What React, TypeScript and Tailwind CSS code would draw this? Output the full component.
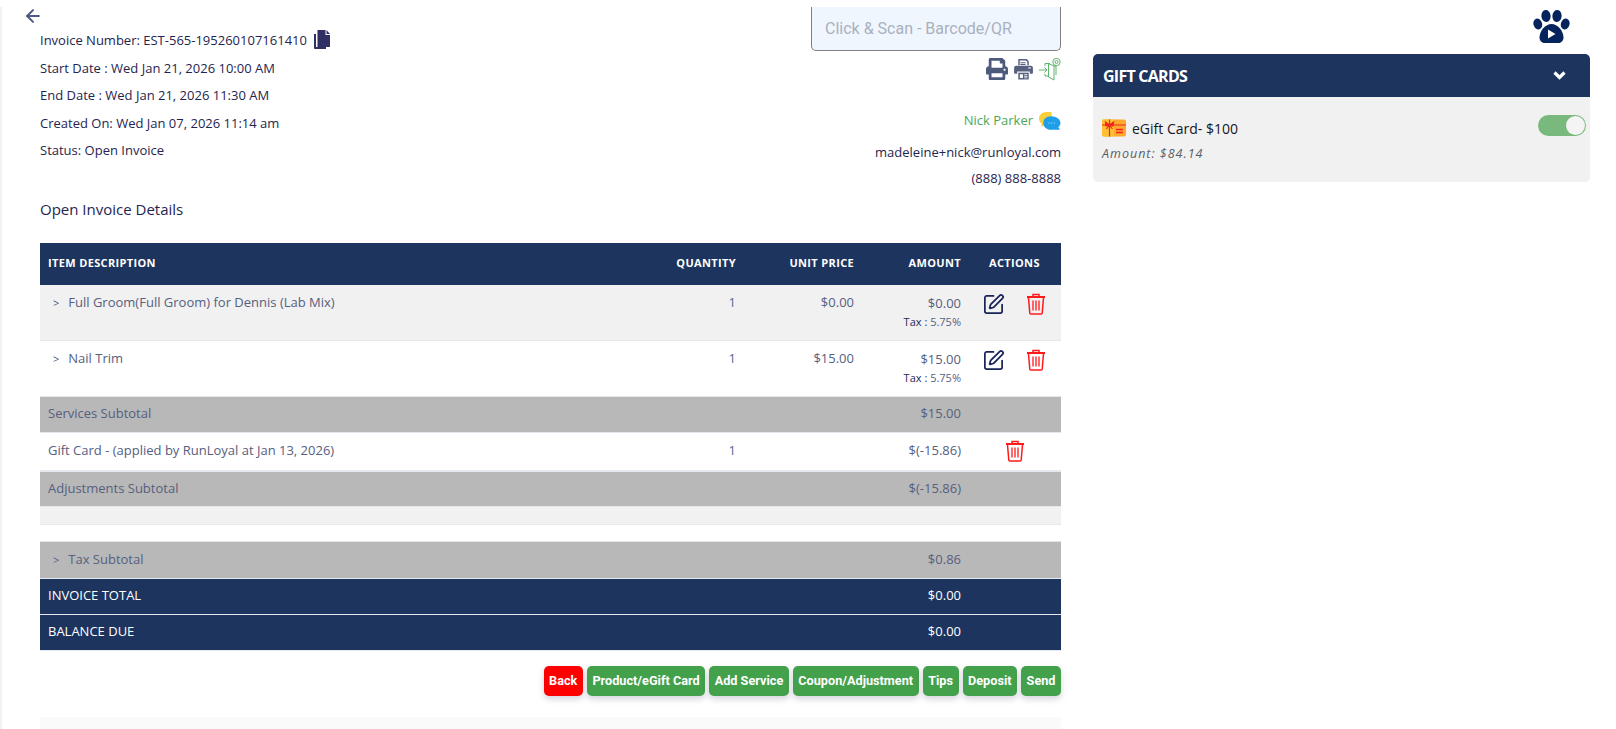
import React from 'react';
import { ArrowLeft, SquarePen } from 'lucide-react';
import { FaPrint } from 'react-icons/fa';

const cols = 'grid grid-cols-[610px_86px_118px_107px_100px]';

const TrashIcon = () => (
  <svg width="20" height="22" viewBox="0 0 20 22" fill="none" stroke="#ff1a1a" strokeWidth="1.5">
    <path d="M7 3V1.5h6V3" />
    <path d="M1 4h18" strokeWidth="2" />
    <path d="M2.5 5l1.3 15a1 1 0 0 0 1 1h10.4a1 1 0 0 0 1-1l1.3-15" />
    <path d="M7 7.5v10M10 7.5v10M13 7.5v10" strokeWidth="1.3" />
  </svg>
);

const CopyIcon = () => (
  <svg width="16" height="19" viewBox="0 0 16 19" fill="#2f2f63">
    <path d="M0 4h2v13h10v2H1a1 1 0 0 1-1-1z" />
    <path d="M3.500 0h8v5h4.500v12H3.500z" />
    <path d="M12.500 0 16 4h-3.500z" />
  </svg>
);

const FaxIcon = () => (
  <svg width="21" height="22" viewBox="0 0 19 21" fill="#56617f">
    <path d="M4.500 1h8l2 2v4h-1.400V3.600L11.800 2.400H5.900V7H4.500z" />
    <path d="M6.500 4h5v1h-5zM6.500 5.800h5v1h-5z" />
    <path d="M2.500 7.500h14a2 2 0 0 1 2 2V14a1 1 0 0 1-1 1h-2v-2H3.500v2h-2a1 1 0 0 1-1-1V9.500a2 2 0 0 1 2-2z" />
    <path d="M4.500 14h10v6.500h-10z" />
    <path d="M6 15.500h3v3.500H6zM10.200 15.500h3v.8h-3zM10.200 17h3v.8h-3zM10.200 18.500h3v.8h-3z" fill="#fff" />
    <path d="M14 9h2.500v1H14z" fill="#fff" />
  </svg>
);

const DoorIcon = () => (
  <svg width="22" height="24" viewBox="0 0 22 24" fill="none" stroke="#5cb56a" strokeWidth="1">
    <path d="M0 13h8M5.500 10.500 8 13l-2.500 2.500" />
    <path d="M6 9V6.500h5M6 17v2h3" />
    <path d="M9.500 6.500 15 9v14l-5.500-3z" />
    <path d="M15 9h2v9" />
    <circle cx="17.500" cy="5" r="1.500" />
    <circle cx="17.500" cy="5" r="3.700" />
  </svg>
);

const ChatIcon = () => (
  <svg width="23" height="21" viewBox="0 0 22 20">
    <path d="M8 1c-4 0-7 2.800-7 6.300 0 2 1 3.700 2.500 4.700L3 15l4-2h6V1z" fill="#fbcf3a" />
    <path d="M12.500 5C7.800 5 5 8 5 11.500S7.800 18 12.500 18H21l-1.500-2.500c1.300-1 2-2.500 2-4C21.500 8 17.500 5 12.500 5z" fill="#1e9fe8" />
    <path d="M10 11.500h1M12.500 11.500h1M15 11.500h1" stroke="#dff2fd" strokeWidth="0.800" />
  </svg>
);

const GiftCardIcon = () => (
  <svg width="24" height="18" viewBox="0 0 24 18">
    <rect x="0" y="0.500" width="24" height="17" rx="2" fill="#fda92d" />
    <path d="M0 .5h12v17H2a2 2 0 0 1-2-2z" fill="#fdc133" />
    <path d="M0 6h24M7.500.5v17" stroke="#f4231f" strokeWidth="1.200" />
    <path d="M7.500 6 3.500 3l.5 4zM7.500 6l4-3-.5 4zM7.500 6l-3 4M7.500 6l3 4" stroke="#f4231f" strokeWidth="1.200" fill="#f4231f" />
    <path d="M14 10.500h7M14 13.500h7" stroke="#f4231f" strokeWidth="1.500" />
  </svg>
);

const PawIcon = () => (
  <svg width="37" height="33" viewBox="0 0 37 33" fill="#03245c">
    <ellipse cx="4.800" cy="14" rx="4.300" ry="5.500" transform="rotate(-18 4.800 14)" />
    <ellipse cx="13" cy="6" rx="4.600" ry="6" transform="rotate(-5 13 6)" />
    <ellipse cx="24" cy="6" rx="4.600" ry="6" transform="rotate(5 24 6)" />
    <ellipse cx="32.200" cy="14" rx="4.300" ry="5.500" transform="rotate(18 32.200 14)" />
    <path d="M18.500 14c-6 0-12 7-12 13.500 0 3.500 2.500 5.500 5.500 5.500h13c3 0 5.500-2 5.500-5.500C30.500 21 24.500 14 18.500 14z" />
    <path d="M15 19.500v9l7.500-4.500z" fill="#fff" />
  </svg>
);

const RowActions = () => (
  <div className="flex items-start gap-[21px] pl-[21px] pt-[8px]">
    <SquarePen size={23} strokeWidth={1.8} className="text-[#1a2358]" />
    <TrashIcon />
  </div>
);

const ItemRow = ({ name, price, bg }: { name: string; price: string; bg: string }) => (
  <div className={`${cols} h-[56px] ${bg} border-b border-[#e4e7ee] text-[#56607f]`}>
    <div className="pt-[8px] pl-[13px]">
      <span className="text-[#4a5578] text-[11px] mr-[9px]">&gt;</span>
      {name}
    </div>
    <div className="pt-[8px] text-right text-[#4f6c96]">1</div>
    <div className="pt-[8px] text-right">{price}</div>
    <div className="pt-[8px] text-right">
      <div className="leading-[20px]">{price}</div>
      <div className="text-[11px] leading-[18px]">
        <span className="text-[#1c2a5e]">Tax : </span>5.75%
      </div>
    </div>
    <RowActions />
  </div>
);

const SubtotalRow = ({ label, amount, chevron, h }: { label: string; amount: string; chevron?: boolean; h: string }) => (
  <div className={`${cols} ${h} items-center pb-[1px] bg-[#b8b8b8] border-b border-[#e4e7ee] text-[#56607f]`}>
    <div className={chevron ? 'pl-[13px]' : 'pl-[8px]'}>
      {chevron && <span className="text-[11px] mr-[9px]">&gt;</span>}
      {label}
    </div>
    <div />
    <div />
    <div className="text-right">{amount}</div>
    <div />
  </div>
);

const TotalRow = ({ label, amount }: { label: string; amount: string }) => (
  <div className={`${cols} h-[36px] items-center pb-[1px] bg-[#1c345e] border-b border-[#e6e9f0] text-white`}>
    <div className="pl-[8px]">{label}</div>
    <div />
    <div />
    <div className="text-right">{amount}</div>
    <div />
  </div>
);

const buttons = ['Product/eGift Card', 'Add Service', 'Coupon/Adjustment', 'Tips', 'Deposit', 'Send'];

const ActionButton = ({ label, red }: { label: string; red?: boolean }) => (
  <button
    className={`h-[30px] rounded-[5px] px-[5.500px] text-white text-[12.700px] font-bold font-['Roboto',sans-serif] shadow-[0_3px_6px_rgba(60,60,90,0.22)] ${
      red ? 'bg-[#ff0000]' : 'bg-[#43a04b]'
    }`}
  >
    {label}
  </button>
);

export default function App() {
  return (
    <div className="w-[1616px] h-[729px] overflow-hidden bg-white pt-[7px] font-['Open_Sans',sans-serif] text-[13px]">
      <div className="flex h-[722px] border-l-2 border-[#f2f2f2]">
        {/* Invoice column */}
        <div className="w-[1059px] shrink-0 pl-[23px]">
          <div className="flex justify-between h-[236px]">
            <div>
              <ArrowLeft size={20} strokeWidth={2.4} className="text-[#4a5a84] -mt-[1px] -ml-[2px]" />
              <div className="pl-[15px] text-[#1f2550] leading-[27.500px] mt-[1px]">
                <div className="flex items-center gap-[7px]">
                  Invoice Number: EST-565-195260107161410
                  <span className="-mt-[3px]">
                    <CopyIcon />
                  </span>
                </div>
                <div>Start Date : Wed Jan 21, 2026 10:00 AM</div>
                <div>End Date : Wed Jan 21, 2026 11:30 AM</div>
                <div>Created On: Wed Jan 07, 2026 11:14 am</div>
                <div>Status: Open Invoice</div>
                <div className="text-[15px] mt-[31px]">Open Invoice Details</div>
              </div>
            </div>
            <div className="flex flex-col items-end text-[#1f2550]">
              <div className="w-[250px] h-[44px] bg-[#eff6fe] border border-t-0 border-[#7d7f85] rounded-b-[5px] pl-[13px] flex items-center text-[16px] text-[#a9b1bd] font-['Roboto',sans-serif]">
                Click &amp; Scan - Barcode/QR
              </div>
              <div className="flex items-center gap-[5px] mt-[6px] h-[24px]">
                <FaPrint size={22} className="text-[#4d5a7c]" />
                <FaxIcon />
                <DoorIcon />
              </div>
              <div className="flex items-center gap-[5px] mt-[29px] h-[22px]">
                <span className="text-[#4aa85a]">Nick Parker</span>
                <ChatIcon />
              </div>
              <div className="mt-[10px] leading-[20px]">madeleine+nick@runloyal.com</div>
              <div className="mt-[6px] leading-[20px]">(888) 888-8888</div>
            </div>
          </div>

          <div className="pl-[15px] w-[1036px]">
            <div className={`${cols} h-[42px] items-center pb-[1px] bg-[#1c345e] text-white text-[11px] font-bold tracking-[0.350px]`}>
              <div className="pl-[8px]">ITEM DESCRIPTION</div>
              <div className="text-right">QUANTITY</div>
              <div className="text-right">UNIT PRICE</div>
              <div className="text-right">AMOUNT</div>
              <div className="pl-[28px]">ACTIONS</div>
            </div>
            <ItemRow name="Full Groom(Full Groom) for Dennis (Lab Mix)" price="$0.00" bg="bg-[#f1f1f1]" />
            <ItemRow name="Nail Trim" price="$15.00" bg="bg-white" />
            <SubtotalRow label="Services Subtotal" amount="$15.00" h="h-[36px]" />
            <div className={`${cols} h-[39px] items-center pb-[1px] bg-white border-b-2 border-[#e4e7ee] text-[#56607f]`}>
              <div className="pl-[8px]">Gift Card - (applied by RunLoyal at Jan 13, 2026)</div>
              <div className="text-right text-[#4f6c96]">1</div>
              <div />
              <div className="text-right">$(-15.86)</div>
              <div className="pl-[44px]">
                <TrashIcon />
              </div>
            </div>
            <SubtotalRow label="Adjustments Subtotal" amount="$(-15.86)" h="h-[35px]" />
            <div className="h-[18px] bg-[#f1f1f1] border-b border-[#e9e9e9]" />
            <div className="h-[16px] bg-white" />
            <div className="border-t border-[#e4e4e4]">
              <SubtotalRow label="Tax Subtotal" amount="$0.86" chevron h="h-[37px]" />
            </div>
            <TotalRow label="INVOICE TOTAL" amount="$0.00" />
            <TotalRow label="BALANCE DUE" amount="$0.00" />
            <div className="flex justify-end gap-[4px] mt-[15px]">
              <ActionButton label="Back" red />
              {buttons.map(label => (
                <ActionButton key={label} label={label} />
              ))}
            </div>
            <div className="h-[40px] mt-[21px] bg-[#fafafa]" />
          </div>
        </div>

        {/* Gift cards column */}
        <div className="w-[497px] shrink-0 ml-[32px]">
          <div className="flex justify-end h-[47px] pr-[20px] pt-[3px]">
            <PawIcon />
          </div>
          <div className="flex items-center justify-between h-[43px] rounded-t-[5px] bg-[#1c345e] pl-[10px] pr-[24px] text-white text-[16px] font-bold tracking-[-0.750px]">
            GIFT CARDS
            <svg width="13" height="9" viewBox="0 0 13 9" fill="none" stroke="#fff" strokeWidth="3.200">
              <path d="M1.500 1.500 6.500 6.500 11.500 1.500" />
            </svg>
          </div>
          <div className="relative h-[85px] rounded-b-[5px] bg-[#f1f1f1] px-[9px] pt-[21px]">
            <div className="flex items-center gap-[6px] h-[20px] text-[14px] font-medium text-[#15171f]">
              <GiftCardIcon />
              eGift Card- $100
            </div>
            <div className="mt-[7px] text-[12.500px] italic tracking-[1px] text-[#5a6068]">Amount: $84.14</div>
            <div className="absolute right-[4px] top-[18px] w-[48px] h-[21px] rounded-full bg-[#7ab97e] flex items-center justify-end pr-[1px]">
              <span className="w-[19px] h-[19px] rounded-full bg-[#f4f4f4]" />
            </div>
          </div>
        </div>
      </div>
    </div>
  );
}
